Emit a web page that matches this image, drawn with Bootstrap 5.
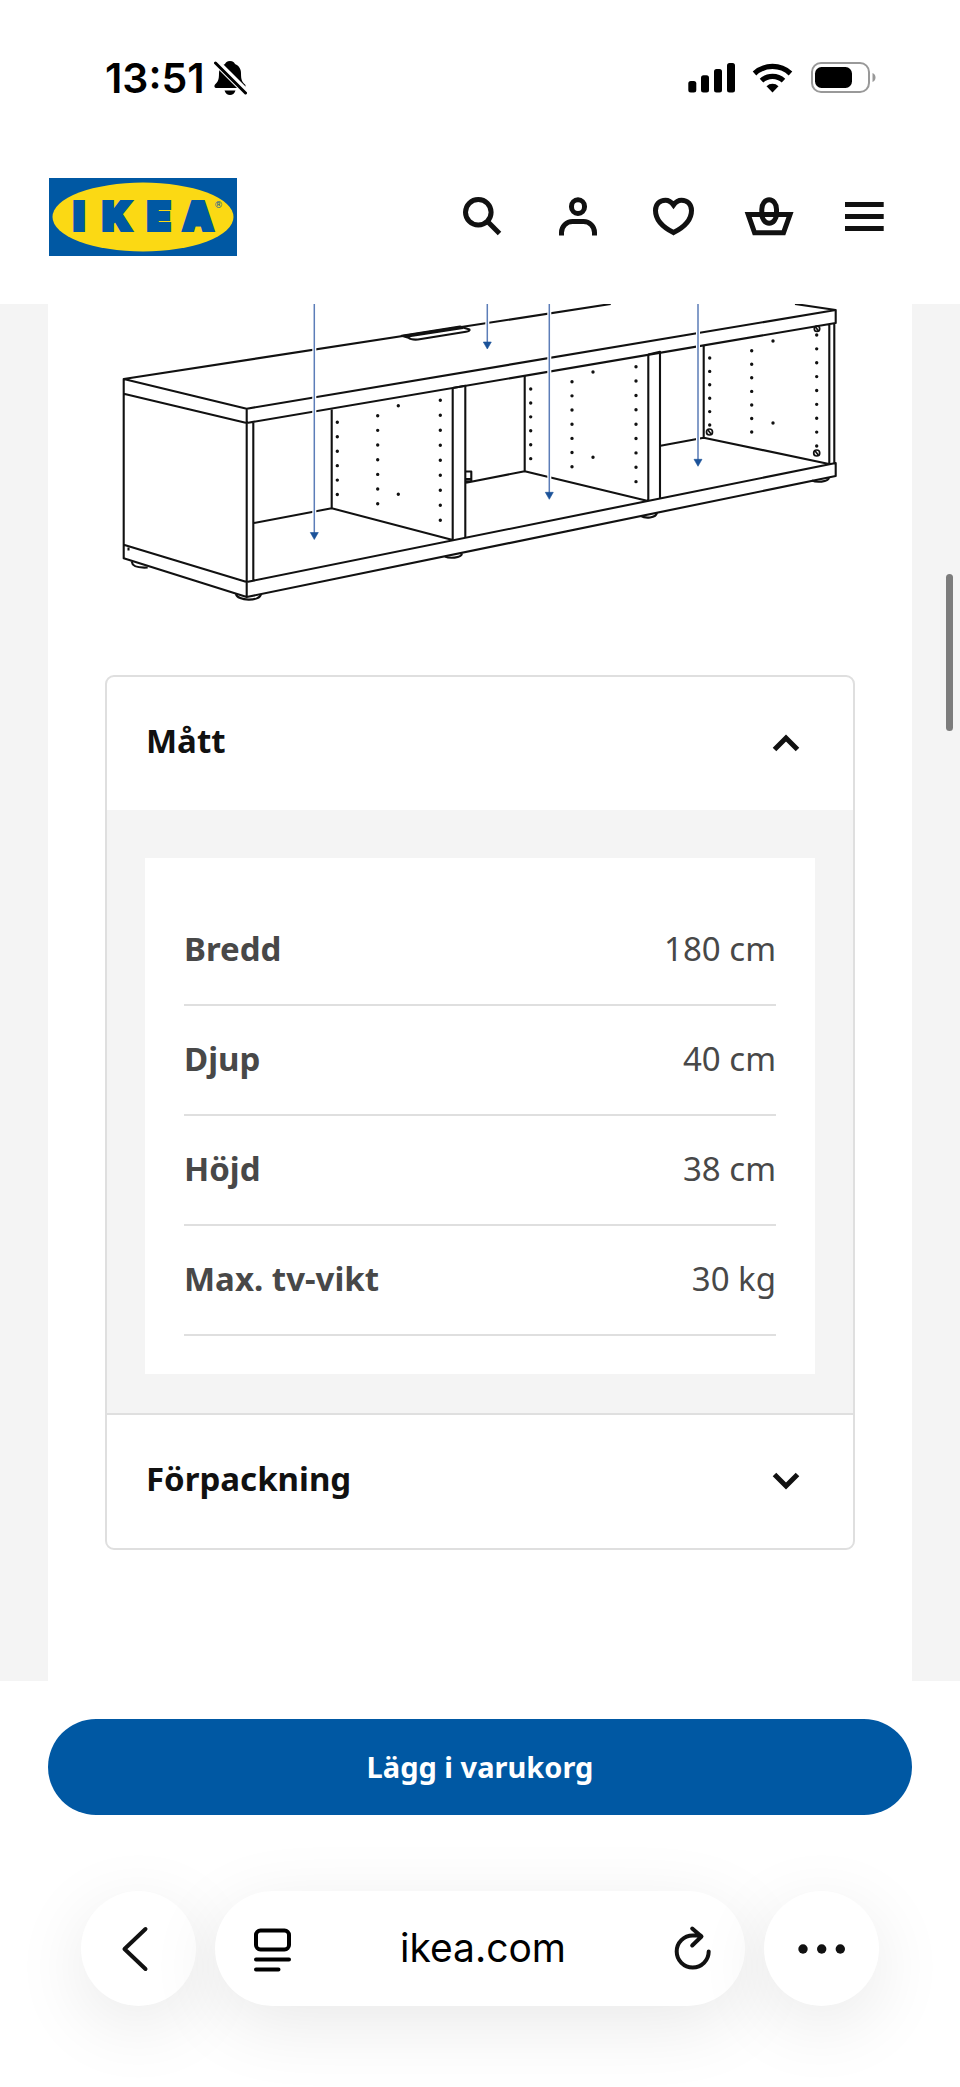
<!DOCTYPE html>
<html lang="sv">
<head>
<meta charset="utf-8">
<meta name="viewport" content="width=device-width, initial-scale=1">
<title>IKEA – Mått</title>
<link href="https://cdn.jsdelivr.net/npm/bootstrap@5.3.0/dist/css/bootstrap.min.css" rel="stylesheet">
<style>
  :root { --ink: #111; --blue: #0058a3; --line: #dfdfdf; --fog: #f4f4f4; }
  body { font-family: "Noto Sans", sans-serif; color: var(--ink); background: #fff; }
  svg { display: block; flex: none; }
  .phone-font { font-family: Inter, sans-serif; font-size: 39px; color: #000; }

  .status-bar { height: 130px; padding: 26px 84px 0 105px; }
  .status-time { font-size: 41px; font-weight: 600; line-height: 48px; }
  .site-header { height: 174px; padding: 0 48px 0 49px; }
  .icon-btn { width: 96px; height: 96px; color: var(--ink); }
  .icon-btn svg { overflow: visible; }

  .page-area { background: var(--fog); padding: 0 48px; }
  .sheet { background: #fff; padding-bottom: 131px; }
  .scroll-thumb { width: 7px; height: 157px; right: 7px; top: 270px; background: #7c7c7c; }

  .specs { margin: 0 57px; border: 2px solid var(--line); border-radius: 9px; overflow: hidden; font-size: 33px; line-height: 46px; }
  .specs-toggle { padding: 41px 51px 42px 39px; font-size: inherit; font-weight: 700; line-height: inherit; color: var(--ink); }
  .specs-toggle span { padding-bottom: 4px; }
  .specs-toggle svg { transition: transform .2s; }
  .specs-toggle.collapsed svg { transform: rotate(180deg); }
  .specs-item + .specs-item { border-top: 2px solid var(--line); }
  .specs-body { background: var(--fog); padding: 48px 38px 39px; }
  .specs-panel { background: #fff; padding: 38px 39px; color: #484848; }
  .specs-panel th, .specs-panel td { padding: 30px 0 32px; border-bottom: 2px solid var(--line); }
  .specs-panel td { text-align: right; }

  .buy-bar { padding: 38px 48px 76px; }
  .buy-btn { height: 96px; background: var(--blue); color: #fff; font-size: 29px; font-weight: 700; }
  .buy-btn:hover { background: #004f93; color: #fff; }

  .browser-bar { gap: 19px; padding: 0 81px 81px; }
  .pill { position: relative; height: 115px; background: #fff; box-shadow: 0 18px 76px rgba(0,0,0,.09); border: 0; }
  .pill-round { width: 115px; }
  .address { min-width: 0; padding: 0 28px 0 34px; }
  .address input { width: 0; min-width: 0; border: 0; outline: 0; background: transparent; text-align: center; }
</style>
</head>
<body>

<div class="status-bar phone-font d-flex align-items-center justify-content-between">
  <div class="d-flex align-items-center gap-2">
    <span class="status-time">13:51</span>
    <svg width="34" height="36" viewBox="0 0 34 36" role="img" aria-label="Ljudlöst">
      <path d="M17 1c3 0 4.500 1.500 5 3 4 1.500 6 5 6 9.500 0 6 1 8.500 4 11 .8.700 1 3.500-1.500 3.500H3.500C1 28 1.200 25.500 2 24.500c3-2.500 4-5 4-11C6 9 8 5.500 12 4c.5-1.500 2-3 5-3z"/>
      <path d="M11.500 30.500h11c-1 3-3 4.500-5.500 4.500s-4.500-1.500-5.500-4.500z"/>
      <path d="M1 0l33 33" stroke="#fff" stroke-width="7"/>
      <path d="M2.500 3l30 30" stroke="#000" stroke-width="3" stroke-linecap="round"/>
    </svg>
  </div>
  <svg width="188" height="32" viewBox="688 62 188 32" role="img" aria-label="Signal, wifi och batteri">
    <rect x="688.300" y="81" width="8" height="11.500" rx="2.500"/>
    <rect x="701" y="75.300" width="8" height="17.200" rx="2.500"/>
    <rect x="714" y="69" width="8" height="23.500" rx="2.500"/>
    <rect x="727" y="63" width="8" height="29.500" rx="2.500"/>
    <path d="M754.500 73.500a26.500 26.500 0 0 1 36 0M761.500 80.700a16.300 16.300 0 0 1 22 0" fill="none" stroke="#000" stroke-width="5.200"/>
    <path d="M772.500 92.400l-6-6.200a8.700 8.700 0 0 1 12 0z"/>
    <rect x="812" y="63" width="57" height="29" rx="9" fill="none" stroke="#999" stroke-width="2"/>
    <rect x="815" y="67" width="37" height="21" rx="6.500"/>
    <path d="M872.500 73c2 .800 3 2.400 3 4.500s-1 3.700-3 4.500z" fill="#999"/>
  </svg>
</div>

<header class="site-header d-flex align-items-center justify-content-between">
  <a href="#" aria-label="IKEA">
    <svg width="188" height="78" viewBox="0 0 188 78">
      <rect width="188" height="78" fill="#0058a3"/>
      <ellipse cx="94" cy="39" rx="90.500" ry="34.500" fill="#fbd914"/>
      <text x="30 68 110 149" y="52" text-anchor="middle" font-family="Inter, sans-serif" font-size="38" font-weight="900" fill="#0058a3" stroke="#0058a3" stroke-width="4">IKEA</text>
      <text x="165" y="30" font-family="DejaVu Sans, sans-serif" font-size="9" fill="#0058a3">®</text>
    </svg>
  </a>
  <nav class="d-flex" aria-label="Huvudmeny">
    <button type="button" class="icon-btn btn p-0 d-flex align-items-center justify-content-center" aria-label="Sök">
      <svg width="48" height="48" fill="none" stroke="currentColor" stroke-width="5"><circle cx="22.300" cy="19.300" r="12.800"/><path d="M31.300 28.300l12.200 12.200"/></svg>
    </button>
    <button type="button" class="icon-btn btn p-0 d-flex align-items-center justify-content-center" aria-label="Profil">
      <svg width="48" height="48" fill="none" stroke="currentColor" stroke-width="5"><rect x="19.500" y="6.800" width="13" height="13.700" rx="6.500"/><path d="M9.500 42.500v-3a11 11 0 0 1 11-11h11a11 11 0 0 1 11 11v3"/></svg>
    </button>
    <button type="button" class="icon-btn btn p-0 d-flex align-items-center justify-content-center" aria-label="Favoriter">
      <svg width="48" height="48" fill="none" stroke="currentColor" stroke-width="5"><path d="M25.500 12C23 8.500 20.500 7.200 17.500 7.200c-6 0-10 4.300-10 10.300 0 8.500 7 16.500 18 22.100 11-5.600 18-13.600 18-22.100 0-6-4-10.300-10-10.300-3 0-5.500 1.300-8 4.800z"/></svg>
    </button>
    <button type="button" class="icon-btn btn p-0 d-flex align-items-center justify-content-center" aria-label="Varukorg">
      <svg width="48" height="48" fill="none" stroke="currentColor" stroke-width="5"><path d="M4.200 21.500h41.800l-6.500 18.300h-28.900z"/><rect x="17.800" y="6.800" width="14.700" height="23.400" rx="7.350" ry="9.500"/></svg>
    </button>
    <button type="button" class="icon-btn btn p-0 d-flex align-items-center justify-content-center" aria-label="Meny">
      <svg width="48" height="48" fill="none" stroke="currentColor" stroke-width="5"><path d="M5 11.500h38.700M5 23.500h38.700M5 35.500h38.700"/></svg>
    </button>
  </nav>
</header>

<main class="page-area position-relative">
  <div class="sheet">
    <svg class="w-100 h-auto" viewBox="48 304 864 371" fill="none" stroke="#111" stroke-width="2.100" stroke-linejoin="round" role="img" aria-label="Tv-bänk med tre öppna fack">
      <!-- top and bottom panels -->
      <path d="M610.700 304L123.700 379V558.300L246.700 597L835.700 476V463L246.700 582L123.700 544.700M795 304L835.700 310V323L246.700 423L123.700 393.700M123.700 379L246.700 408.700L835.700 310M246.700 408.700V597M253.300 421V581M829.300 324V464M834.300 323V463"/>
      <!-- cable outlet -->
      <path d="M401.700 335.700L460 326.500L469.500 329.500Q470 331 466 331.700L418 339.500Q411 340 408.500 337.800zM406 336.800L463 328"/>
      <!-- left bay -->
      <path d="M331.700 409.500V508.300L254 523M331.700 508.300L452.700 540M452.700 388V540M452.700 388L465.300 385.700V538"/>
      <!-- middle bay -->
      <path d="M524.700 376V471.300L466 482.700M524.700 471.300L648 501M648.300 354.500V501M648.300 354.500L660 351.700V498.500M465.500 471.500H471.300V481.300H465.500M465.500 479H471"/>
      <!-- right bay -->
      <path d="M703.700 345V437.700L660.500 445.700M703.700 437.700L829 464M128.500 547.500v3"/>
      <!-- feet -->
      <path d="M131.700 561.500c.5 5 8 6.500 16 6M236 594c1 7 24 8 25 0M445 556.500c4 2 16 2 17-3M641 516c4 2.500 15 2.500 16-3.500M812 480.500c4 2 16 2 17-3"/>
      <!-- shelf peg holes -->
      <g stroke-width="3.400" stroke-linecap="round">
        <path d="M337.300 422.300V496" stroke-dasharray="0 14.450"/>
        <path d="M377.700 415.700V505" stroke-dasharray="0 14.670"/>
        <path d="M398.300 405.700h0M398.300 494.300h0M593 372h0M593 457.300h0M773 341h0M773 423h0"/>
        <path d="M440.300 400.300V521.500" stroke-dasharray="0 15"/>
        <path d="M530.700 389V460" stroke-dasharray="0 13.930"/>
        <path d="M572 381.700V468" stroke-dasharray="0 14.170"/>
        <path d="M636 366.700V483" stroke-dasharray="0 14.370"/>
        <path d="M709.700 358V426" stroke-dasharray="0 13.400"/>
        <path d="M751.700 350.700V433" stroke-dasharray="0 13.560"/>
        <path d="M816.700 335V447" stroke-dasharray="0 13.870"/>
      </g>
      <g stroke-width="1.700"><circle cx="709.500" cy="432" r="3"/><circle cx="816.700" cy="453" r="3"/><circle cx="817" cy="328.700" r="2.700"/><path d="M708 430l3 4M815.200 451l3 4M815.500 327l3 4"/></g>
      <!-- measurement arrows -->
      <path d="M314.300 304V534M487.300 304V343M549.300 304V494M698 304V461" stroke="#fff" stroke-width="4"/>
      <path d="M314.300 304V534M487.300 304V343M549.300 304V494M698 304V461" stroke="#5c7db8" stroke-width="1.500"/>
      <path d="M310.300 532.500h8l-4 7zM483.300 342h8l-4 7zM545.300 492.300h8l-4 7zM694 459.300h8l-4 7z" fill="#1b5299" stroke="#1b5299" stroke-width=".6"/>
    </svg>

    <div class="specs">
      <section class="specs-item">
        <button type="button" class="specs-toggle btn rounded-0 border-0 w-100 d-flex align-items-center justify-content-between text-start" data-bs-toggle="collapse" data-bs-target="#matt" aria-expanded="true" aria-controls="matt">
          <span>Mått</span>
          <svg width="32" height="32" fill="none" stroke="currentColor" stroke-width="5"><path d="M4.500 22.500L16 11l11.500 11.500"/></svg>
        </button>
        <div class="collapse show" id="matt">
          <div class="specs-body">
            <div class="specs-panel">
              <table class="w-100">
                <tbody>
                  <tr><th scope="row">Bredd</th><td>180 cm</td></tr>
                  <tr><th scope="row">Djup</th><td>40 cm</td></tr>
                  <tr><th scope="row">Höjd</th><td>38 cm</td></tr>
                  <tr><th scope="row">Max. tv-vikt</th><td>30 kg</td></tr>
                </tbody>
              </table>
            </div>
          </div>
        </div>
      </section>
      <section class="specs-item">
        <button type="button" class="specs-toggle collapsed btn rounded-0 border-0 w-100 d-flex align-items-center justify-content-between text-start" aria-expanded="false">
          <span>Förpackning</span>
          <svg width="32" height="32" fill="none" stroke="currentColor" stroke-width="5"><path d="M4.500 22.500L16 11l11.500 11.500"/></svg>
        </button>
      </section>
    </div>
  </div>
  <div class="scroll-thumb position-absolute rounded-pill"></div>
</main>

<div class="buy-bar">
  <button type="button" class="buy-btn btn w-100 rounded-pill border-0">Lägg i varukorg</button>
</div>

<div class="browser-bar d-flex">
  <button type="button" class="pill pill-round rounded-circle p-0 d-flex align-items-center justify-content-center flex-shrink-0" aria-label="Tillbaka">
    <svg width="48" height="48" fill="none" stroke="#111" stroke-width="4" stroke-linecap="round" stroke-linejoin="round"><path d="M30.500 4L9.500 24L30.500 44"/></svg>
  </button>
  <div class="pill address rounded-pill flex-grow-1 d-flex align-items-center">
    <button type="button" class="btn p-0 border-0" aria-label="Läsarvy">
      <svg width="48" height="48" fill="none" stroke="#000" stroke-width="4" stroke-linecap="round"><rect x="7" y="5.500" width="33" height="19" rx="4.500"/><path d="M7 34.500h33M7 44.500h22.500"/></svg>
    </button>
    <input type="text" class="phone-font flex-grow-1" value="ikea.com" aria-label="Adress">
    <button type="button" class="btn p-0 border-0" aria-label="Ladda om">
      <svg width="48" height="48" fill="none" stroke="#111" stroke-width="4" stroke-linecap="round" stroke-linejoin="round"><path d="M39.700 26.500a16 16 0 1 1-16-16h8M23.200 3.500L32.500 11.500L23.200 20.500"/></svg>
    </button>
  </div>
  <button type="button" class="pill pill-round rounded-circle p-0 d-flex align-items-center justify-content-center flex-shrink-0" aria-label="Mer">
    <svg width="48" height="12" fill="#111"><circle cx="5" cy="6" r="4.700"/><circle cx="23.700" cy="6" r="4.700"/><circle cx="42.300" cy="6" r="4.700"/></svg>
  </button>
</div>

<script src="https://cdn.jsdelivr.net/npm/bootstrap@5.3.0/dist/js/bootstrap.bundle.min.js"></script>
</body>
</html>
